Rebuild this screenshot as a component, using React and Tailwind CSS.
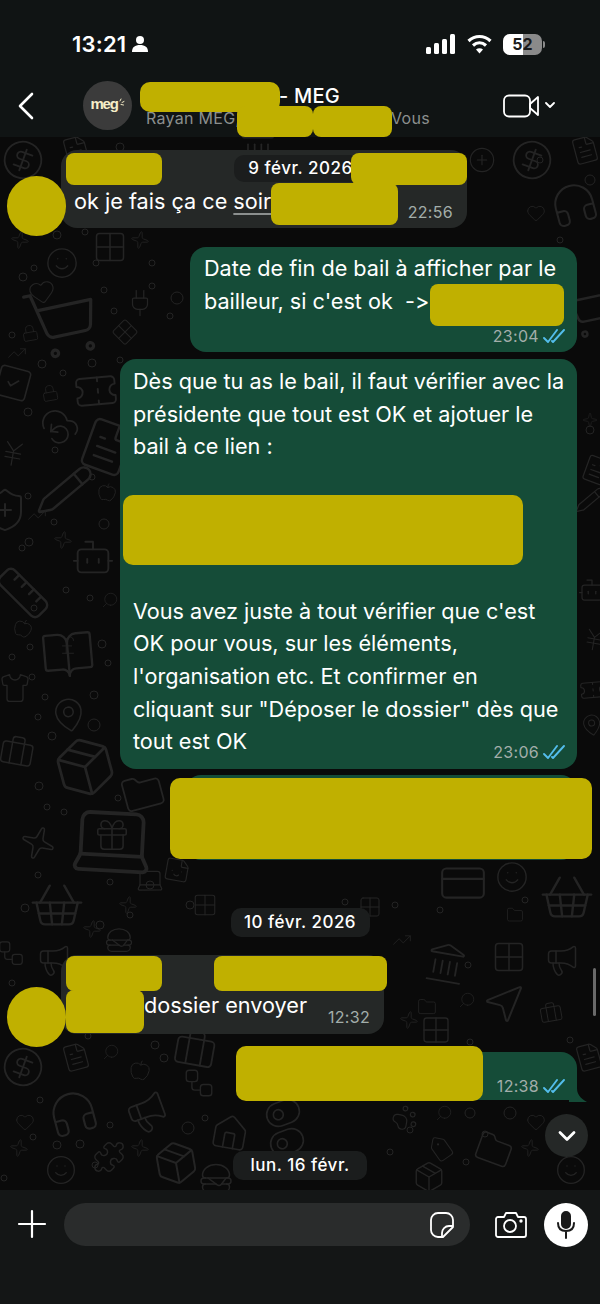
import React from 'react';
import {
  ShoppingCart, Heart, Smile, Lock, TrendingUp, SquareCheck, CloudBackup, Plug, Pencil, ShieldPlus, Ruler,
  BookOpen, MapPin, Laptop, ShoppingBasket, Search, Landmark, MousePointer2, Briefcase, Folder, Headphones,
  Megaphone, ToggleLeft, Home, PawPrint, Tag, CreditCard, Workflow, Hamburger, Sparkle, Apple, Shirt, Package,
  FileText, CircleDollarSign, JapaneseYen, PoundSterling, Ticket, Gift, Grid2x2, Puzzle, Bot, Sticker, CirclePlus, ChevronDown,
} from 'lucide-react';

const font = { fontFamily: 'Inter, "Liberation Sans", sans-serif' };

// x, y, size, rotation
const doodles = [
  [CircleDollarSign, 23, 160, 44, 20], [FileText, 76, 150, 30, -15], [Landmark, 258, 146, 40, 0], [CirclePlus, 482, 160, 28, 0],
  [CircleDollarSign, 532, 160, 44, 20], [FileText, 585, 150, 30, -15], [Headphones, 574, 204, 50, -15], [Heart, 536, 213, 20, 0],
  [Sparkle, 20, 240, 20, 10], [Smile, 62, 263, 34, 0], [Heart, 42, 292, 28, -10], [ShoppingCart, 62, 322, 78, -12], [Plug, 140, 303, 30, 0],
  [Grid2x2, 110, 247, 36, 0], [Sparkle, 140, 240, 20, 10], [Grid2x2, 125, 332, 24, 45], [Lock, 30, 333, 18, -10], [Lock, 50, 393, 18, -10],
  [TrendingUp, 17, 353, 20, 0], [SquareCheck, 13, 383, 40, 15], [Ticket, 96, 391, 46, -5], [CloudBackup, 60, 427, 42, 5],
  [JapaneseYen, 13, 454, 30, 10], [FileText, 107, 447, 58, 20], [Pencil, 65, 490, 58, 5], [Apple, 107, 492, 20, 10], [ShieldPlus, 5, 510, 48, 0],
  [TrendingUp, 37, 515, 20, 0], [Sparkle, 63, 540, 20, 10], [Bot, 93, 557, 46, 0], [Ruler, 23, 593, 58, 0], [Search, 110, 600, 18, 90],
  [Apple, 23, 628, 20, 20], [BookOpen, 68, 655, 56, -5], [PoundSterling, 68, 645, 22, 0], [Shirt, 15, 688, 32, 0], [MapPin, 69, 715, 38, -10],
  [Briefcase, 17, 752, 36, 10], [Package, 85, 767, 66, -15], [Folder, 143, 793, 44, -15], [Laptop, 112, 840, 92, 3], [Gift, 112, 835, 38, 0],
  [Sparkle, 38, 843, 38, 20], [ShoppingBasket, 57, 905, 58, 0], [Sticker, 177, 870, 28, 10], [CreditCard, 463, 883, 50, 0], [Smile, 512, 877, 34, 0],
  [ShoppingBasket, 567, 897, 58, 0], [Sparkle, 92, 929, 20, 10], [Hamburger, 119, 940, 30, 0], [Workflow, 11, 953, 30, 0], [Megaphone, 54, 960, 36, 0],
  [Landmark, 446, 963, 44, 10], [Megaphone, 562, 960, 36, 0], [Grid2x2, 509, 957, 36, 0], [MousePointer2, 505, 1003, 48, 90], [Briefcase, 551, 1013, 24, -10],
  [Folder, 427, 1007, 20, 0], [Search, 467, 1000, 18, 90], [Sparkle, 409, 1020, 20, 10], [Grid2x2, 436, 1030, 32, 0], [TrendingUp, 402, 940, 20, 0],
  [CircleDollarSign, 23, 1067, 44, 20], [FileText, 76, 1057, 30, -15], [Search, 111, 1052, 18, 90], [Apple, 140, 1070, 22, 10], [Briefcase, 195, 1050, 44, 10],
  [Workflow, 199, 1083, 34, 0], [FileText, 589, 1057, 30, -15], [Headphones, 73, 1113, 52, -15], [Megaphone, 147, 1113, 44, -20], [Heart, 25, 1122, 20, 0],
  [ToggleLeft, 283, 1113, 40, -20], [ToggleLeft, 287, 1142, 40, -20], [Home, 230, 1133, 40, 10], [PawPrint, 405, 1118, 28, 10], [Search, 444, 1113, 18, 90],
  [Folder, 494, 1150, 38, 20], [Tag, 442, 1150, 26, 10], [Package, 429, 1177, 34, 0], [Puzzle, 109, 1157, 34, 0], [Sparkle, 140, 1148, 20, 10],
  [Sparkle, 530, 1148, 20, 10], [Sparkle, 19, 1148, 20, 10], [Smile, 61, 1170, 32, 0], [Package, 176, 1163, 48, -10], [Hamburger, 216, 1178, 36, 0],
  [Smile, 571, 1170, 32, 0], [Heart, 536, 1122, 20, 0],
  // right hand strip beside the bubbles
  [ShoppingCart, 590, 310, 60, -12], [Sparkle, 590, 420, 16, 0], [FileText, 596, 470, 30, 20], [Pencil, 590, 500, 30, 5], [Bot, 592, 590, 30, 0],
  [JapaneseYen, 594, 640, 26, 10], [Ticket, 592, 690, 26, -5], [MapPin, 592, 725, 24, -10], [Laptop, 150, 880, 30, 0],
  [Grid2x2, 205, 905, 26, 0], [Sparkle, 128, 905, 20, 10], [Grid2x2, 370, 907, 24, 0], [Folder, 515, 915, 18, 0],
];

const dots = [
  [57, 235, 4], [85, 232, 3], [34, 268, 3], [23, 277, 4], [96, 263, 3], [152, 263, 3], [104, 290, 3], [152, 286, 3], [177, 298, 6], [170, 316, 3],
  [114, 311, 3], [12, 335, 3], [120, 360, 3], [42, 364, 4], [92, 363, 4], [63, 373, 3], [28, 412, 4], [55, 450, 3], [92, 477, 3], [28, 496, 3],
  [54, 522, 3], [104, 524, 5], [29, 542, 4], [22, 548, 3], [66, 590, 3], [90, 598, 3], [34, 608, 3], [30, 647, 3], [12, 657, 3], [102, 644, 4],
  [108, 663, 3], [32, 677, 3], [45, 697, 3], [94, 695, 4], [38, 717, 3], [94, 725, 6], [52, 736, 4], [39, 786, 4], [47, 807, 3], [64, 812, 3],
  [118, 798, 3], [38, 875, 3], [110, 882, 3], [150, 885, 4], [25, 908, 4], [100, 925, 4], [130, 915, 3], [12, 983, 3], [35, 1003, 3], [468, 965, 3],
  [470, 1042, 3], [570, 1040, 3], [155, 1045, 4], [164, 1058, 4], [88, 1036, 3], [40, 1100, 3], [110, 1125, 3], [188, 1128, 6], [205, 1118, 3], [33, 1137, 3],
  [57, 1145, 4], [80, 1144, 4], [95, 1165, 3], [4, 1178, 3], [390, 1152, 3], [410, 1130, 3], [466, 1162, 3], [470, 1113, 5], [510, 1113, 6], [485, 1134, 3],
  [525, 900, 3], [440, 910, 3], [395, 905, 3], [345, 902, 3], [190, 905, 4], [120, 147, 4], [540, 160, 3], [590, 180, 5], [560, 240, 3], [590, 430, 4],
];

const Doodles = () => (
  <svg className="absolute inset-0 w-full h-full" viewBox="0 0 600 1304" fill="none" aria-hidden="true">
    <g stroke="#242424" strokeWidth="1" color="#242424">
      {doodles.map(([Icon, x, y, size, rot], i) => (
        <g key={i} transform={`translate(${x} ${y}) rotate(${rot})`}>
          <Icon x={-size / 2} y={-size / 2} width={size} height={size} absoluteStrokeWidth strokeWidth={1} />
        </g>
      ))}
      {dots.map(([x, y, r], i) => <circle key={i} cx={x} cy={y} r={r} />)}
    </g>
  </svg>
);

const Checks = () => (
  <svg width="22" height="16" viewBox="0 0 22 16" fill="none" stroke="#53bdeb" strokeWidth="1.9" strokeLinecap="round" strokeLinejoin="round">
    <path d="M1 10l4 4L14 2" />
    <path d="M9 13l1 1L21 2" />
  </svg>
);

const Meta = ({ time, read }) => (
  <div className="flex items-center gap-[4px] text-[16px] leading-5 tracking-[0.3px] text-[#a3aeaa]">
    <span>{time}</span>
    {read && <Checks />}
  </div>
);

const DateChip = ({ children, className }) => (
  <div className={`flex items-center justify-center rounded-[10px] bg-[#1b1d1d] text-[17px] font-medium text-white tracking-[0.5px] ${className}`}>
    {children}
  </div>
);

const Redact = ({ className }) => <div className={`absolute bg-[#c0b000] ${className}`} />;

export default function App() {
  return (
    <div className="relative w-[600px] h-[1304px] overflow-hidden flex flex-col bg-[#0a0a0a] text-white [font-feature-settings:'calt'_0]" style={font}>
      <Doodles />

      {/* Top bars */}
      <div className="relative h-[137px] shrink-0 bg-[#101414] flex flex-col z-10">
        <div className="h-[70px] pt-[30px] pl-[72px] pr-[55px] flex items-start justify-between">
          <div className="flex items-center gap-[6px]">
            <span className="text-[22px] leading-7 font-semibold tracking-[0.2px]">13:21</span>
            <svg width="16" height="18" viewBox="0 0 16 18" fill="white">
              <circle cx="8" cy="5" r="4" />
              <path d="M0 17c0-5 3-7 8-7s8 2 8 7z" />
            </svg>
          </div>
          <div className="flex items-center gap-[11px] h-7">
            <svg width="30" height="20" viewBox="0 0 30 20" fill="white">
              <rect x="0" y="13" width="5" height="7" rx="1.5" />
              <rect x="8" y="9" width="5" height="11" rx="1.5" />
              <rect x="16" y="5" width="5" height="15" rx="1.5" />
              <rect x="24" y="0" width="5" height="20" rx="1.5" />
            </svg>
            <svg width="25" height="20" viewBox="0 0 25 20" fill="none" stroke="white" strokeWidth="3.2">
              <path d="M1.5 7c6.5-6 15.500-6 22 0" />
              <path d="M6 11.500c4-3.500 9-3.500 13 0" />
              <path d="M12.500 19.500l-3.500-4c2-1.600 5-1.600 7 0z" fill="white" stroke="none" />
            </svg>
            <div className="flex items-center">
              <div className="relative w-[39px] h-[21px] rounded-[7px] overflow-hidden bg-[#8a8a8a] flex">
                <div className="w-[52%] bg-white" />
                <span className="absolute inset-0 flex items-center justify-center text-[16px] font-bold text-[#1a1a1a]">52</span>
              </div>
              <div className="w-[2px] h-[7px] ml-[1px] rounded-r bg-[#8a8a8a]" />
            </div>
          </div>
        </div>
        <div className="flex-1 flex items-center pt-[4px] pl-[14px] pr-[45px]">
          <svg width="24" height="30" viewBox="0 0 24 30" fill="none" stroke="white" strokeWidth="2.6" strokeLinecap="round" strokeLinejoin="round">
            <path d="M18 3L6 15l12 12" />
          </svg>
          <div className="ml-[45px] w-[49px] h-[49px] rounded-full bg-[#3b3b3b] flex items-center justify-center">
            <span className="text-[15px] font-bold tracking-[-1.2px] text-[#f6eec8] pb-[3px]" style={{ fontFamily: '"Liberation Sans", sans-serif' }}>meg</span>
            <svg className="mb-[8px] ml-[1px]" width="6" height="8" viewBox="0 0 6 8" stroke="#f6eec8" strokeWidth="1" strokeLinecap="round">
              <path d="M1 3L2 1M3 4.500L5 3.500M2 6.500L4.500 7" />
            </svg>
          </div>
          <div className="ml-[14px] flex-1">
            <div className="pl-[133px] pt-[1px] text-[20px] leading-6 font-medium tracking-[0.2px]">- MEG</div>
            <div className="flex justify-between w-[284px] text-[16px] leading-5 text-[#8b8f8e] tracking-[0.3px]">
              <span>Rayan MEG,</span>
              <span>Vous</span>
            </div>
          </div>
          <svg width="52" height="24" viewBox="0 0 52 24" fill="none" stroke="white" strokeWidth="1.8" strokeLinejoin="round" strokeLinecap="round">
            <rect x="1" y="1.500" width="26" height="21" rx="5" />
            <path d="M27 10l8-7v18l-8-7z" />
            <path d="M46 10l4 4 4-4" transform="translate(-3 -1)" />
          </svg>
        </div>
      </div>

      {/* Chat */}
      <div className="relative flex-1 flex flex-col items-start">
        <div className="relative ml-[61px] mt-[13px] w-[406px] h-[78px] rounded-[16px] bg-[#252827] pl-[13px] pr-[14px] pt-[37px] flex justify-between">
          <span className="text-[21.65px] leading-7">ok je fais ça ce <span className="underline decoration-[#8b8f8e] underline-offset-4">soir</span></span>
          <div className="pt-[15px]"><Meta time="22:56" /></div>
        </div>

        <div className="relative ml-[190px] mt-[19px] w-[387px] h-[105px] rounded-[16px] bg-[#154c38] pl-[14px] pr-[12px] pt-[5px]">
          <p className="text-[21.65px] leading-[32.5px] whitespace-nowrap">Date de fin de bail à afficher par le<br />bailleur, si c'est ok&nbsp; -&gt;</p>
          <div className="flex justify-end mt-[9px]"><Meta time="23:04" read /></div>
        </div>

        <div className="relative ml-[120px] mt-[7px] w-[457px] h-[410px] rounded-[16px] bg-[#154c38] pl-[13px] pr-[12px] pt-[6px] text-[21.65px] leading-[32.6px] whitespace-nowrap">
          <p>Dès que tu as le bail, il faut vérifier avec la<br />présidente que tout est OK et ajotuer le<br />bail à ce lien :</p>
          <div className="h-[132px]" />
          <p>Vous avez juste à tout vérifier que c'est<br />OK pour vous, sur les éléments,<br />l'organisation etc. Et confirmer en<br />cliquant sur "Déposer le dossier" dès que</p>
          <div className="flex justify-between items-end">
            <span>tout est OK</span>
            <div className="mb-[-4px]"><Meta time="23:06" read /></div>
          </div>
        </div>

        <div className="relative ml-[185px] mt-[6px] w-[392px] h-[85px] rounded-[16px] bg-[#154c38]" />

        <DateChip className="relative self-center mt-[48px] w-[139px] h-[29px]">10 févr. 2026</DateChip>

        <div className="relative ml-[61px] mt-[18px] w-[323px] h-[79px] rounded-[16px] bg-[#252827] pl-[83px] pr-[14px] pt-[36px] flex justify-between">
          <span className="text-[21.65px] leading-7">dossier envoyer</span>
          <div className="pt-[16px]"><Meta time="12:32" /></div>
        </div>

        <div className="relative ml-[400px] mt-[18px] w-[177px] h-[48px] rounded-[16px] rounded-br-none bg-[#154c38] pr-[12px] pt-[20px] flex justify-end">
          <Meta time="12:38" read />
          <svg className="absolute left-[169px] bottom-[-2px]" width="18" height="14" viewBox="0 0 18 14" fill="#154c38">
            <path d="M0 0h8c0 6 3 10 10 14H0z" />
          </svg>
        </div>

        <DateChip className="absolute left-[233px] top-[1014px] w-[134px] h-[29px]">lun. 16 févr.</DateChip>
        <DateChip className="absolute left-[234px] top-[18px] w-[133px] h-[27px]">9 févr. 2026</DateChip>

        <button className="absolute left-[545px] top-[977px] w-[43px] h-[43px] rounded-full bg-[#252827] flex items-center justify-center">
          <ChevronDown className="w-7 h-7 text-white" strokeWidth={2.4} />
        </button>
        <div className="absolute left-[593px] top-[831px] w-[3px] h-[48px] rounded-full bg-[#6a6a6a]" />
      </div>

      {/* Composer */}
      <div className="relative z-10 h-[114px] shrink-0 bg-[#141616] px-[12px] pt-[13px] flex items-start">
        <svg className="mt-[5px] ml-[4px]" width="32" height="32" viewBox="0 0 32 32" stroke="white" strokeWidth="2.2" strokeLinecap="round">
          <path d="M16 3v26M3 16h26" />
        </svg>
        <div className="ml-[16px] w-[406px] h-[43px] rounded-full bg-[#2a2c2c] flex items-center justify-end pr-[15px]">
          <svg width="26" height="28" viewBox="0 0 26 28" fill="none" stroke="white" strokeWidth="1.8" strokeLinejoin="round">
            <path d="M9 2h8a7 7 0 0 1 7 7v7l-10 10H9a7 7 0 0 1-7-7V9a7 7 0 0 1 7-7z" />
            <path d="M24 15h-4a7 7 0 0 0-7 7v4" />
          </svg>
        </div>
        <svg className="ml-[25px] mt-[9px]" width="32" height="26" viewBox="0 0 32 26" fill="none" stroke="white" strokeWidth="1.8" strokeLinejoin="round">
          <path d="M3 5h6l2-4h10l2 4h6a2 2 0 0 1 2 2v16a2 2 0 0 1-2 2H3a2 2 0 0 1-2-2V7a2 2 0 0 1 2-2z" />
          <circle cx="15" cy="14" r="6" />
          <circle cx="26" cy="9" r="0.8" fill="white" />
        </svg>
        <div className="ml-[17px] w-[44px] h-[44px] rounded-full bg-white flex items-center justify-center">
          <svg width="20" height="28" viewBox="0 0 20 28" fill="none" stroke="#1a1a1a" strokeWidth="2" strokeLinecap="round">
            <rect x="6" y="1" width="8" height="16" rx="4" fill="#1a1a1a" />
            <path d="M2 12c0 5 3 8 8 8s8-3 8-8M10 20v7" />
          </svg>
        </div>
      </div>

      {/* Masked areas, on top of everything */}
      <Redact className="z-20 left-[140px] top-[82px] w-[140px] h-[30px] rounded-[10px]" />
      <Redact className="z-20 left-[237px] top-[106px] w-[76px] h-[31px] rounded-[8px]" />
      <Redact className="z-20 left-[313px] top-[106px] w-[79px] h-[31px] rounded-[8px]" />
      <Redact className="z-20 left-[66px] top-[153px] w-[96px] h-[32px] rounded-[8px]" />
      <Redact className="z-20 left-[351px] top-[153px] w-[116px] h-[32px] rounded-[8px]" />
      <Redact className="z-20 left-[271px] top-[183px] w-[127px] h-[42px] rounded-[8px]" />
      <Redact className="z-20 left-[7px] top-[176px] w-[59px] h-[60px] rounded-full" />
      <Redact className="z-20 left-[430px] top-[284px] w-[134px] h-[42px] rounded-[8px]" />
      <Redact className="z-20 left-[123px] top-[495px] w-[400px] h-[70px] rounded-[10px]" />
      <Redact className="z-20 left-[170px] top-[778px] w-[422px] h-[81px] rounded-[10px]" />
      <Redact className="z-20 left-[66px] top-[956px] w-[96px] h-[35px] rounded-[8px]" />
      <Redact className="z-20 left-[66px] top-[990px] w-[78px] h-[43px] rounded-[8px]" />
      <Redact className="z-20 left-[214px] top-[956px] w-[173px] h-[35px] rounded-[8px]" />
      <Redact className="z-20 left-[7px] top-[987px] w-[59px] h-[60px] rounded-full" />
      <Redact className="z-20 left-[236px] top-[1046px] w-[247px] h-[55px] rounded-[10px]" />
    </div>
  );
}
